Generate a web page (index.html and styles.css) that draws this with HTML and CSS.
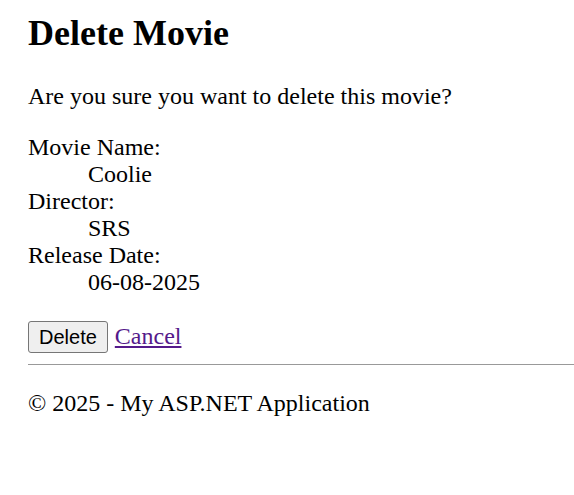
FILE: index.html
```html
<!DOCTYPE html>
<html>
<head>
<meta charset="utf-8">
<link rel="stylesheet" href="styles.css">
<title>Delete Movie</title>
</head>
<body>
<div class="page">
  <h2 class="title">Delete Movie</h2>
  <p class="question">Are you sure you want to delete this movie?</p>
  <dl class="details">
    <dt>Movie Name:</dt>
    <dd>Coolie</dd>
    <dt>Director:</dt>
    <dd>SRS</dd>
    <dt>Release Date:</dt>
    <dd>06-08-2025</dd>
  </dl>
  <form class="actions">
    <button type="button" class="btn">Delete</button>
    <a href="#" class="cancel">Cancel</a>
  </form>
  <hr class="rule">
  <footer class="footer">
    <p>© 2025 - My ASP.NET Application</p>
  </footer>
</div>
</body>
</html>
```
FILE: styles.css
```css
html, body {
  margin: 0;
  padding: 0;
  background: #fff;
}
.page {
  padding: 0 0 0 28px;
  font-family: "Liberation Serif", "Times New Roman", serif;
  font-size: 24px;
  line-height: 27px;
  color: #000;
}
.title {
  margin: 0;
  padding-top: 13px;
  font-size: 36px;
  line-height: 41px;
  font-weight: bold;
}
.question {
  margin: 29px 0 0 0;
}
.details {
  margin: 24px 0 0 0;
}
.details dt { margin: 0; }
.details dd { margin: 0 0 0 60px; }
.actions {
  margin: 25px 0 0 0;
  display: flex;
  align-items: baseline;
  gap: 7px;
}
.btn {
  font-family: Arial, "Liberation Sans", sans-serif;
  font-size: 20px;
  height: 32px;
  padding: 0 10px;
  border: 1px solid #767676;
  border-radius: 3px;
  background: #efefef;
  color: #000;
}
.cancel {
  color: #551a8b;
  text-decoration: underline;
}
.rule {
  margin: 11px 0 0 0;
  border: 0;
  border-top: 1px solid #999;
  height: 0;
}
.footer p {
  margin: 25px 0 0 0;
}
```
